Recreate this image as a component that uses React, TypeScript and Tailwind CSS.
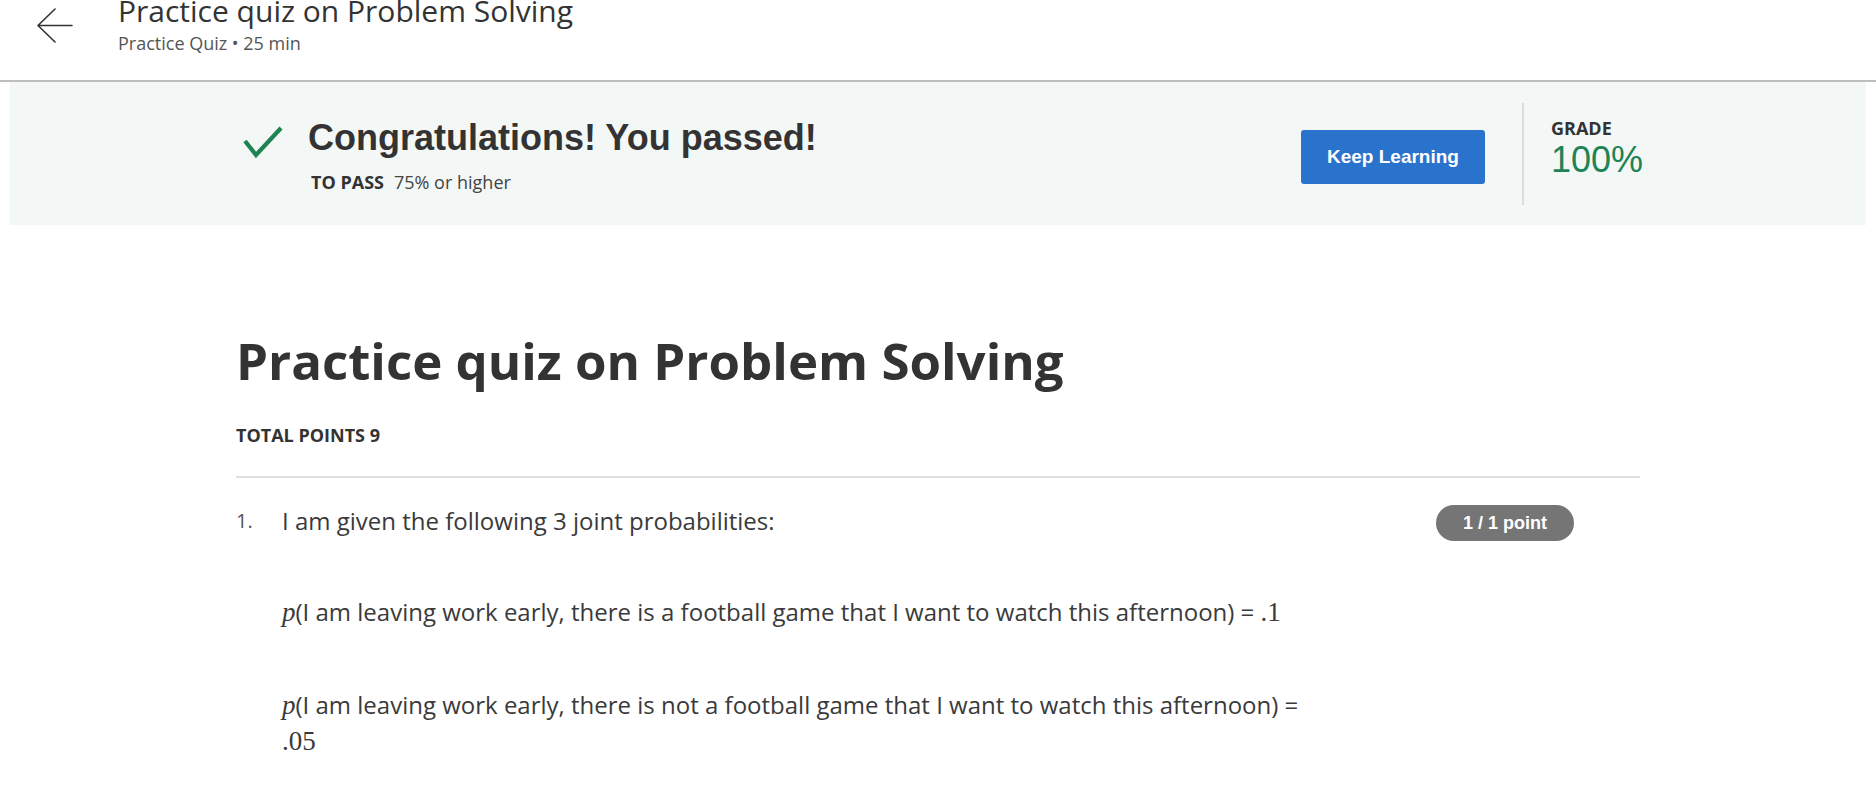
import React from "react";

const os = "font-['Open_Sans',sans-serif]";
const ar = "font-['Liberation_Sans',Arial,sans-serif]";
const sr = "font-['Liberation_Serif','Times_New_Roman',serif]";

function BackArrow() {
  return (
    <svg width="36" height="36" viewBox="0 0 36 36" fill="none" className="shrink-0">
      <path d="M1 17.5H35M1 17.5L18 1M1 17.5L18 34" stroke="#333" strokeWidth="1.6" strokeLinecap="round" strokeLinejoin="round" />
    </svg>
  );
}

function Check() {
  return (
    <svg width="44" height="36" viewBox="0 0 44 36" fill="none" className="shrink-0">
      <path d="M4 17L15 31L40 4" stroke="#1f8354" strokeWidth="4.2" strokeLinejoin="miter" />
    </svg>
  );
}

export default function App() {
  return (
    <div className={`w-full min-h-screen bg-white text-[#333] ${os}`}>
      {/* Header */}
      <div className="h-[82px] flex items-start border-b-2 border-[#bdbdbd]">
        <div className="ml-[37px] mt-[8px]">
          <BackArrow />
        </div>
        <div className="ml-[45px] -mt-[4px] flex flex-col">
          <div className="text-[30px] leading-[30px] text-[#333]">Practice quiz on Problem Solving</div>
          <div className="mt-[8px] text-[18px] leading-[18px] text-[#555]">Practice Quiz • 25 min</div>
        </div>
      </div>

      {/* Passed band */}
      <div className="mx-[10px] h-[143px] bg-[#f3f8f7]">
        <div className="w-[1404px] mx-auto h-full flex justify-between">
          <div className="flex items-start">
            <div className="ml-[5px] mt-[42px]">
              <Check />
            </div>
            <div className="ml-[23px] mt-[36px] flex flex-col">
              <div className={`${ar} font-bold text-[36px] leading-[40px] text-[#333]`}>
                Congratulations! You passed!
              </div>
              <div className="mt-[12px] ml-[3px] text-[18px] leading-[24px] text-[#444]">
                <span className="font-bold text-[#333]">TO PASS</span>
                <span className="ml-[10px]">75% or higher</span>
              </div>
            </div>
          </div>
          <div className="flex items-start">
            <button className={`mt-[48px] w-[184px] h-[54px] rounded-[3px] bg-[#2a73cc] text-white ${ar} font-bold text-[19px]`}>
              Keep Learning
            </button>
            <div className="ml-[37px] mt-[21px] w-[2px] h-[102px] bg-[#dcdcdc]" />
            <div className="ml-[27px] mt-[34px] w-[89px] flex flex-col">
              <div className="text-[18px] leading-[24px] font-bold text-[#333]">GRADE</div>
              <div className={`${ar} text-[36px] leading-[40px] text-[#1f8354] whitespace-nowrap`}>100%</div>
            </div>
          </div>
        </div>
      </div>

      {/* Main content */}
      <div className="w-[1404px] mx-auto">
        <h1 className="mt-[105px] text-[51px] leading-[60px] font-bold text-[#333]">
          Practice quiz on Problem Solving
        </h1>
        <div className="mt-[33px] text-[18px] leading-[24px] font-bold text-[#333]">TOTAL POINTS 9</div>
        <div className="mt-[29px] h-[2px] bg-[#e0e0e0]" />

        <div className="mt-[25px] flex items-start">
          <div className="w-[46px] text-[20px] leading-[36px] text-[#555]">1.</div>
          <div className="w-[1030px] text-[24px] leading-[36px] text-[#3a3a3a]">
            <p>I am given the following 3 joint probabilities:</p>
            <p className="mt-[55px]">
              <span className={`${sr} italic text-[27px]`}>p</span>
              (I am leaving work early, there is a football game that I want to watch this afternoon) ={" "}
              <span className={`${sr} text-[27px]`}>.1</span>
            </p>
            <p className="mt-[57px] leading-[36px]">
              <span className={`${sr} italic text-[27px]`}>p</span>
              (I am leaving work early, there is not a football game that I want to watch this afternoon) =
              <br />
              <span className={`${sr} text-[27px]`}>.05</span>
            </p>
          </div>
          <div className={`ml-auto mr-[66px] mt-[2px] w-[138px] h-[36px] rounded-full bg-[#757575] flex items-center justify-center text-white ${ar} font-bold text-[18px]`}>
            1 / 1 point
          </div>
        </div>
      </div>
    </div>
  );
}
